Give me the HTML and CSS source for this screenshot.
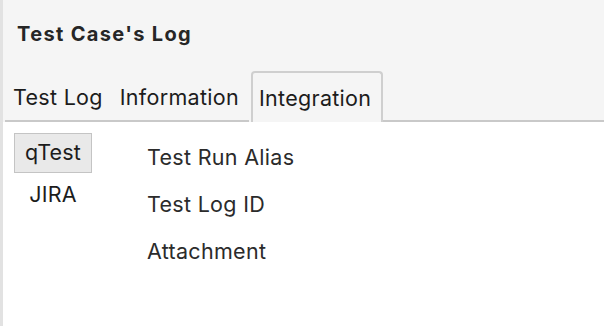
FILE: index.html
```html
<!DOCTYPE html>
<html lang="en">
<head>
    <meta charset="UTF-8">
    <meta name="viewport" content="width=device-width, initial-scale=1.0">
    <title>Test Case's Log</title>
    <link rel="stylesheet" href="styles.css">
</head>
<body>

    <div class="panel">
        <div class="header">
            <h1 class="title">Test Case's Log</h1>
            <div class="tabs">
                <div class="tab">Test Log</div>
                <div class="tab">Information</div>
                <div class="tab active">Integration</div>
                <div class="tab-fill"></div>
            </div>
        </div>

        <div class="content">
            <div class="systems">
                <div class="system selected">qTest</div>
                <div class="system">JIRA</div>
            </div>
            <div class="fields">
                <div class="field">Test Run Alias</div>
                <div class="field">Test Log ID</div>
                <div class="field">Attachment</div>
            </div>
        </div>
    </div>

</body>
</html>
```

FILE: styles.css
```css
html, body {
    margin: 0;
    height: 100%;
}

body {
    font-family: Inter, "Noto Sans", Arial, sans-serif;
    color: #1c1c1c;
    background-color: #ffffff;
}

.panel {
    height: 100%;
    border-left: 3px solid #e2e2e2;
    box-sizing: border-box;
    display: flex;
    flex-direction: column;
}

.header {
    background-color: #f5f5f5;
}

.title {
    margin: 0;
    padding: 22px 0 0 14px;
    height: 48px;
    box-sizing: border-box;
    font-size: 20px;
    line-height: 24px;
    font-weight: 700;
    letter-spacing: 1.35px;
    color: #262626;
}

.tabs {
    display: flex;
    align-items: flex-end;
    height: 74px;
    box-sizing: border-box;
}

.tab {
    font-size: 21.5px;
    letter-spacing: 0.3px;
    padding: 0 10px;
    height: 51px;
    line-height: 53px;
    border-bottom: 2px solid #c9c9c9;
    box-sizing: border-box;
}

.tab:first-child {
    margin-left: 2px;
    padding: 0 7px 0 8px;
}

.tab.active {
    padding: 0 10px 0 6px;
    margin-left: 2px;
    line-height: 50px;
    border: 2px solid #cfcfcf;
    border-bottom: none;
    border-radius: 4px 4px 0 0;
}

.tab-fill {
    flex: 1;
    border-bottom: 2px solid #c9c9c9;
}

.content {
    flex: 1;
    display: flex;
    padding: 11px 0 0 11px;
}

.systems {
    width: 133px;
    display: flex;
    flex-direction: column;
    align-items: flex-start;
}

.system {
    font-size: 21.5px;
    letter-spacing: 0.2px;
    width: 78px;
    text-align: center;
    height: 26px;
    line-height: 26px;
    margin-top: 8px;
}

.system.selected {
    margin-top: 0;
    height: 40px;
    line-height: 37px;
    background-color: #e9e9e9;
    border: 1px solid #c4c4c4;
    box-sizing: border-box;
}

.fields {
    display: flex;
    flex-direction: column;
    gap: 23px;
    padding-top: 12px;
}

.field {
    font-size: 21.5px;
    letter-spacing: 0.3px;
    color: #2b2b2b;
    height: 24px;
    line-height: 24px;
}
```
